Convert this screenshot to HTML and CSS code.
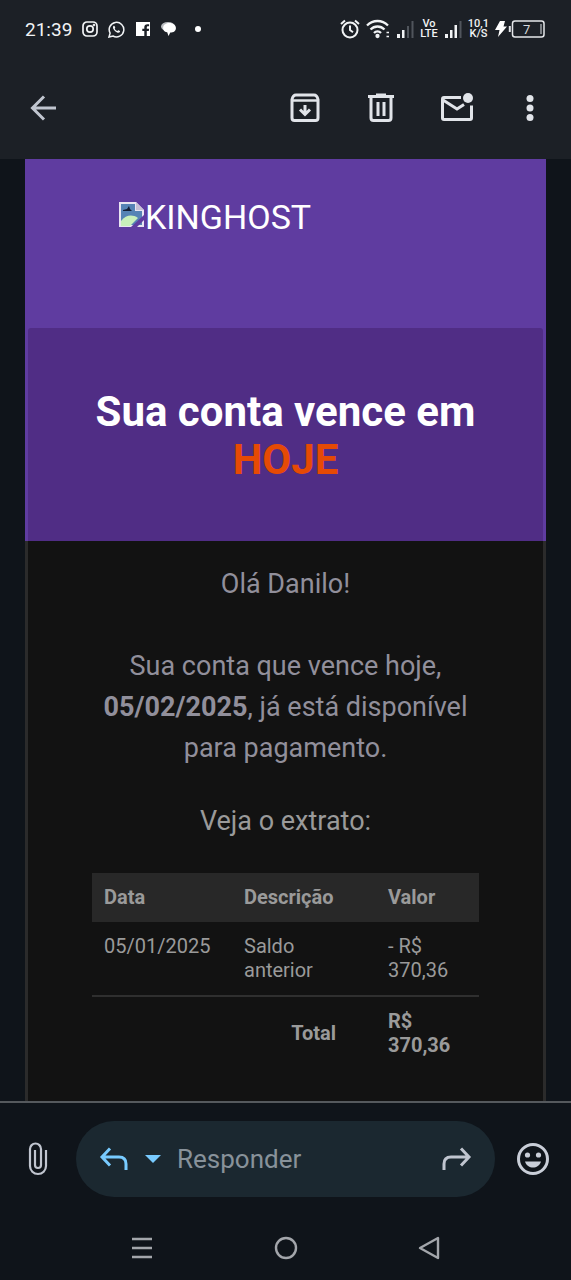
FILE: index.html
```html
<!DOCTYPE html>
<html lang="pt-BR">
<head>
<meta charset="utf-8">
<meta name="viewport" content="width=device-width, initial-scale=1">
<title>Sua conta vence hoje</title>
<link rel="stylesheet" href="styles.css">
</head>
<body>
<header class="top">
  <div class="status">
    <div class="status-left">
      <span class="clock">21:39</span>
      <svg width="16" height="16" viewBox="0 0 16 16" fill="none" stroke="#f1f3f5" stroke-width="1.700"><rect x="1" y="1" width="14" height="14" rx="4"/><circle cx="8" cy="8" r="3.200"/><circle cx="12" cy="4" r=".5"/></svg>
      <svg width="17" height="17" viewBox="0 0 17 17" fill="none" stroke="#f1f3f5" stroke-width="1.500"><path d="M1 16l1.100-3.900A7.300 7.300 0 1 1 5 15z"/><path d="M5.700 4.800c-1.500 1.200-.6 3.400 1.200 5.200s4 2.500 5 1.100c.4-.7.1-1-.4-1.300l-1-.5c-.7-.3-.9.9-1.400.7-1.100-.4-1.900-1.300-2.300-2.200-.2-.5.6-.7.4-1.300l-.5-1.200c-.2-.5-.5-.8-1-.5z" fill="#f1f3f5" stroke="none"/></svg>
      <svg width="16" height="16" viewBox="0 0 16 16"><path fill="#fff" d="M1 1h14v14h-3.200v-5h2l.3-2.300h-2.300V6.400c0-.8.3-1.200 1.200-1.200h1.100V3.200h-1.700c-2 0-3.100 1.100-3.100 3v1.500H7.300V10h2v5H1z"/></svg>
      <svg width="16" height="16" viewBox="0 0 16 16"><ellipse cx="7" cy="5.500" rx="7" ry="4.500" fill="#b9bcc0"/><path fill="#fff" d="M3 4c3-3 8-2.500 10-.5 2.500 1.500 2.600 5.500.3 7-1 .8-2.500 1-4 1L7.500 15 6.200 11.300C2.500 11 1 7 3 4z"/></svg>
      <span class="dot"></span>
    </div>
    <div class="status-right">
      <svg width="20" height="20" viewBox="0 0 20 20" fill="none" stroke="#f1f3f5" stroke-width="2"><circle cx="10" cy="11" r="7.500"/><path d="M10 6.500V11l3 2.200M1 5l4-3.500M19 5l-4-3.500"/></svg>
      <svg width="24" height="20" viewBox="0 0 24 20" fill="none" stroke="#f1f3f5" stroke-width="2.300"><path d="M1 6.500c6-6 15-6 21 0M4.500 10.500c4-4 10-4 14 0M8 14c2-2 5-2 7 0"/><circle cx="11.500" cy="17" r="1" fill="#f1f3f5"/><path d="M20.500 13.500h2.500M20.500 17.500h2.500" stroke-width="1.500"/></svg>
      <svg width="18" height="18" viewBox="0 0 18 18"><path fill="#f1f3f5" d="M1 14h3v4H1zM6 10h2.500v8H6z"/><path fill="#50555c" d="M11 6h2v12h-2zM15.500 1h2v17h-2z"/></svg>
      <span class="duo">Vo<br>LTE</span>
      <svg width="18" height="18" viewBox="0 0 18 18"><path fill="#f1f3f5" d="M1 14h3v4H1zM6 10h2.500v8H6zM10.500 5H13v13h-2.500z"/><path fill="#50555c" d="M15.500 1h2v17h-2z"/></svg>
      <span class="duo">10,1<br>K/S</span>
      <svg width="50" height="18" viewBox="0 0 50 18"><path fill="#fff" d="M5 1h5L8.500 6.500H12L3 17l1.500-7H0z"/><rect x="17.500" y="1" width="31.500" height="16" rx="2.500" fill="none" stroke="#e5e7ea" stroke-width="1.500"/><path d="M14.800 6v6" stroke="#e5e7ea" stroke-width="2"/><path d="M46 4v10" stroke="#9da1a6" stroke-width="1.500"/><text x="28" y="13.500" class="battery-text">7</text></svg>
    </div>
  </div>
  <nav class="toolbar" aria-label="Ações da mensagem">
    <button class="tool back" aria-label="Voltar"><svg width="28" height="28" viewBox="0 0 28 28" fill="none" stroke="#c0c5cf" stroke-width="3"><path d="M26 14H3M14 2.500L2.500 14 14 25.500"/></svg></button>
    <button class="tool" aria-label="Arquivar"><svg width="30" height="30" viewBox="0 0 30 30" fill="none" stroke="#e1e4e9" stroke-width="3"><path d="M2 6.500V25q0 2.500 2.500 2.500h21q2.500 0 2.500-2.500V6.500Q27 2 24 2H6Q3 2 2 6.500z"/><path d="M2 7.500h26" stroke-width="2.500"/><path d="M15 12v9M10 16.500l5 5 5-5"/></svg></button>
    <button class="tool" aria-label="Excluir"><svg width="28" height="30" viewBox="0 0 28 30" fill="none" stroke="#e1e4e9" stroke-width="3"><path d="M1 3.500h26M9 2h10M4 4v21q0 2.500 2.500 2.500h15q2.500 0 2.500-2.500V4M11 9v14M17 9v14"/></svg></button>
    <button class="tool" aria-label="Marcar como não lida"><svg width="34" height="30" viewBox="0 0 34 30" fill="none" stroke="#e1e4e9" stroke-width="3"><path d="M21 4.500H4Q2.500 4.500 2.500 6v19q0 1.500 1.500 1.500h26q1.500 0 1.500-1.500V12.500M3 7l14 9 7-4.500"/><circle cx="28" cy="5" r="5" fill="#e1e4e9" stroke="none"/></svg></button>
    <button class="tool" aria-label="Mais opções"><svg width="8" height="28" viewBox="0 0 8 28" fill="#e1e4e9"><circle cx="4" cy="4.500" r="3.500"/><circle cx="4" cy="14" r="3.500"/><circle cx="4" cy="23.500" r="3.500"/></svg></button>
  </nav>
</header>

<main class="viewport">
  <article class="mail">
    <div class="brand">
      <svg width="26" height="32" viewBox="0 0 26 32"><path fill="#e9e5f2" d="M0 1h17l8 8v17H0z"/><path fill="#5683b5" d="M2 3h14v7h7v14H2z"/><path fill="#c9efbb" d="M2 20c5-6 11-7 17-3l-8 8H2z"/><path fill="#141e35" d="M4 9l4-1 2-3 1 3 2 2H4z"/><path fill="#c8c1d6" d="M17 1v8h8z"/><path fill="#5f3ca0" d="M25 14v5l-7 7h-6z"/></svg><span>KINGHOST</span>
    </div>
    <h1 class="title">Sua conta vence em <span class="due">HOJE</span></h1>
    <div class="content">
      <p class="greeting">Olá Danilo!</p>
      <p class="message">Sua conta que vence hoje, <b>05/02/2025</b>, já está disponível para pagamento.</p>
      <p class="lead">Veja o extrato:</p>
      <table class="statement">
        <thead><tr><th class="col-date">Data</th><th class="col-desc">Descrição</th><th>Valor</th></tr></thead>
        <tbody><tr><td>05/01/2025</td><td>Saldo anterior</td><td>- R$ 370,36</td></tr></tbody>
        <tfoot><tr><td colspan="2" class="total">Total</td><td>R$ 370,36</td></tr></tfoot>
      </table>
    </div>
  </article>
</main>

<footer class="bottom">
  <div class="compose">
    <button class="tool" aria-label="Anexar"><svg width="20" height="34" viewBox="0 0 20 34" fill="none" stroke="#c0c5cf" stroke-width="2.200"><path d="M18 8v16a8 8 0 0 1-16 0V7a5 5 0 0 1 11 0v16a3 3 0 0 1-6 0V8"/></svg></button>
    <div class="pill">
      <button class="tool" aria-label="Responder"><svg width="30" height="24" viewBox="0 0 30 24" fill="none" stroke="#78cbff" stroke-width="3"><path d="M11 1.500L3 10l8 8.500M3 10h17q7 0 7 7v6"/></svg></button>
      <button class="tool" aria-label="Tipo de resposta"><svg width="16" height="8" viewBox="0 0 16 8"><path fill="#78cbff" d="M0 0h16L8 8z"/></svg></button>
      <input class="reply" type="text" placeholder="Responder" aria-label="Responder">
      <button class="tool" aria-label="Encaminhar"><svg width="30" height="24" viewBox="0 0 30 24" fill="none" stroke="#c0c5cf" stroke-width="3"><path d="M19 1.500l8 8.500-8 8.500M27 10H9q-7 0-7 7v6"/></svg></button>
    </div>
    <button class="tool" aria-label="Emoji"><svg width="32" height="32" viewBox="0 0 32 32"><circle cx="16" cy="16" r="14.500" fill="none" stroke="#c9ced8" stroke-width="3"/><circle cx="10.500" cy="12" r="2.600" fill="#c9ced8"/><circle cx="21.500" cy="12" r="2.600" fill="#c9ced8"/><path fill="#c9ced8" d="M8 18.500h16c-2.500 8-13.500 8-16 0z"/></svg></button>
  </div>
  <nav class="system" aria-label="Navegação do sistema">
    <button class="tool" aria-label="Recentes"><svg width="22" height="22" viewBox="0 0 22 22" stroke="#a3a6ab" stroke-width="2.400"><path d="M1 2h20M1 11h20M1 20h20"/></svg></button>
    <button class="tool" aria-label="Início"><svg width="24" height="24" viewBox="0 0 24 24"><circle cx="12" cy="12" r="10" fill="none" stroke="#a3a6ab" stroke-width="2.400"/></svg></button>
    <button class="tool" aria-label="Voltar ao anterior"><svg width="22" height="24" viewBox="0 0 22 24" fill="none" stroke="#a3a6ab" stroke-width="2.400" stroke-linejoin="round"><path d="M20 2v20L2 12z"/></svg></button>
  </nav>
</footer>
</body>
</html>
```

FILE: styles.css
```css
* { box-sizing: border-box; }

body {
  margin: 0;
  min-height: 100vh;
  display: flex;
  flex-direction: column;
  background: #0f141a;
  color: #9a9a9a;
  font-family: Roboto, "Liberation Sans", sans-serif;
}

svg { display: block; flex: none; }

.tool {
  display: flex;
  align-items: center;
  justify-content: center;
  flex: none;
  padding: 0;
  border: 0;
  background: none;
}

.top { background: #1c2026; }

.status {
  display: flex;
  justify-content: space-between;
  align-items: center;
  height: 58px;
  padding: 0 26px 0 25px;
  color: #f1f3f5;
}

.status-left { display: flex; align-items: center; gap: 10px; }
.status-right { display: flex; align-items: center; gap: 6px; }
.clock { font-size: 19px; }
.dot { width: 6px; height: 6px; margin-left: 8px; border-radius: 50%; background: #fff; }
.duo { font-size: 11px; line-height: 10px; font-weight: 500; text-align: center; }
.battery-text { fill: #d5d8dc; font-size: 13px; }

.toolbar {
  display: grid;
  grid-template-columns: 1fr 76px 76px 76px 70px;
  align-items: center;
  height: 101px;
  padding: 0 6px 2px 30px;
}
.back { justify-content: flex-start; }

.viewport {
  flex: 1;
  display: flex;
  flex-direction: column;
  padding: 0 25px;
}

.mail {
  flex: 1;
  display: flex;
  flex-direction: column;
  background: #5f3ca0;
}

.brand {
  display: flex;
  align-items: center;
  height: 169px;
  padding: 0 94px 54px;
  color: #fff;
  font-size: 34px;
}

.title {
  margin: 0 3px;
  padding: 60px 56px 57px;
  background: #502d85;
  border-radius: 3px 3px 0 0;
  color: #fff;
  font-size: 42px;
  line-height: 48px;
  font-weight: 700;
  text-align: center;
}
.due { color: #e64a05; }

.content {
  flex: 1;
  padding: 23px 64px 0;
  border: solid #2b2b2b;
  border-width: 0 3px;
  background: #121212;
  font-size: 27px;
  line-height: 41px;
  text-align: center;
}
.greeting, .message { margin: 0 0 41px; color: #918f9b; }
.message { margin-bottom: 32px; }
.lead { margin: 0 0 31px; }

.statement {
  width: 100%;
  border-collapse: collapse;
  table-layout: fixed;
  font-size: 20px;
  line-height: 24px;
  text-align: left;
}
.col-date { width: 140px; }
.col-desc { width: 144px; }
.statement th, .statement td { padding: 12px 12px 13px; vertical-align: top; }
.statement td:not(:first-child) { padding-right: 30px; }
.statement thead { background: #282828; }
.statement tfoot { border-top: 2px solid #2f2f2f; font-weight: 700; }
.statement td.total { padding-right: 40px; text-align: right; vertical-align: middle; }

.bottom { border-top: 2px solid #55595d; background: #0f141a; }

.compose {
  display: grid;
  grid-template-columns: 76px minmax(0, 1fr) 76px;
  padding-top: 18px;
}
.pill {
  display: flex;
  align-items: center;
  gap: 16px;
  height: 76px;
  padding: 0 23px;
  border-radius: 38px;
  background: #1b2830;
}
.reply {
  flex: 1;
  min-width: 0;
  padding: 0;
  border: 0;
  outline: 0;
  background: none;
  color: #e1e4e9;
  font: 26px Roboto, "Liberation Sans", sans-serif;
}
.reply::placeholder { color: #88929a; opacity: 1; }

.system {
  display: flex;
  justify-content: space-between;
  align-items: center;
  height: 83px;
  padding: 19px 23% 0;
}
```
